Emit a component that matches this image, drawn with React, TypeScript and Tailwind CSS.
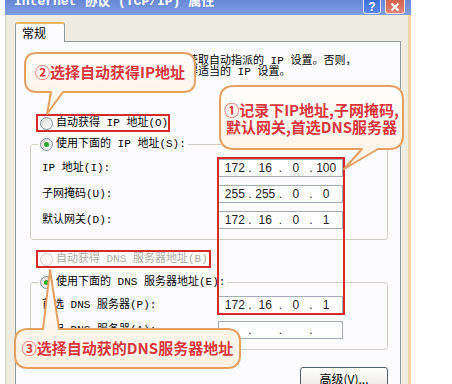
import React from 'react';

const sys = "font-['Liberation_Mono','Noto_Sans_CJK_SC',monospace]";
const note = "font-['Noto_Sans_CJK_SC','Liberation_Sans',sans-serif]";

function Radio({ checked = false, disabled = false }: { checked?: boolean; disabled?: boolean }) {
  return (
    <span
      className={`w-[13px] h-[13px] shrink-0 rounded-full border flex items-center justify-center bg-gradient-to-br ${
        disabled ? 'border-[#d3d1c6] from-[#f1f0ea] to-white' : 'border-[#7d8fa1] from-[#d9d9d2] to-white'
      }`}
    >
      {checked && <span className="w-[5px] h-[5px] rounded-full bg-[#2da52d]" />}
    </span>
  );
}

function IpInput({ parts }: { parts: string[] }) {
  return (
    <div className="w-[125px] h-[18px] border border-[#a3adb8] bg-white flex items-center px-[4px] text-[12px] font-['Liberation_Sans',sans-serif] text-[#222]">
      {parts.map((p, i) => (
        <React.Fragment key={i}>
          {i > 0 && <span className="w-[7px] text-center">.</span>}
          <span className="w-[24px] text-center">{p}</span>
        </React.Fragment>
      ))}
    </div>
  );
}

function Row({ label, parts }: { label: string; parts: string[] }) {
  return (
    <div className="flex items-center h-[18px]">
      <span className="w-[176px] whitespace-nowrap">{label}</span>
      <IpInput parts={parts} />
    </div>
  );
}

const bubblePaths = [
  // ② bubble, tail down to first radio
  'M37,53 H183 Q195,53 195,65 V80 Q195,92 183,92 H63 L47,114 L51,92 H37 Q25,92 25,80 V65 Q25,53 37,53 Z',
  // ① bubble, tail down-left to the address box
  'M234,86 H389 Q403,86 403,100 V135 Q403,149 389,149 H378 L344,169 L362,149 H234 Q220,149 220,135 V100 Q220,86 234,86 Z',
  // ③ bubble, tail up to DNS radio
  'M28,329 H43 L50,270 L59,329 H227 Q240,329 240,342 V355 Q240,368 227,368 H28 Q15,368 15,355 V342 Q15,329 28,329 Z',
];

export default function App() {
  return (
    <div className={`relative w-[452px] h-[384px] overflow-hidden bg-white ${sys} text-[11px] text-black`}>
      <div className="ml-[5px] w-[406px] h-full flex flex-col">
        {/* Title bar */}
        <div className="h-[15px] shrink-0 flex bg-gradient-to-b from-[#6888d6] to-[#7e9de2] pl-[9px] pr-[6px] overflow-hidden">
          <span className="text-[13px] leading-[15px] -mt-[6px] font-bold text-white whitespace-nowrap">
            Internet 协议 (TCP/IP) 属性
          </span>
          <div className="ml-auto flex gap-[4px]">
            <div className="w-[18px] h-[14px] rounded-b-[3px] border border-t-0 border-white/80 bg-gradient-to-b from-[#3f6fd8] to-[#5a86e4] flex items-center justify-center text-white text-[12px] leading-none font-bold font-['Liberation_Sans',sans-serif]">
              ?
            </div>
            <div className="w-[20px] h-[14px] rounded-b-[3px] border border-t-0 border-white/80 bg-gradient-to-b from-[#d6624f] to-[#e08373] flex items-center justify-center">
              <svg width="10" height="10" viewBox="0 0 10 10">
                <path d="M1.5 1.5 L8.5 8.5 M8.5 1.5 L1.5 8.5" stroke="white" strokeWidth="2" />
              </svg>
            </div>
          </div>
        </div>

        {/* Body */}
        <div className="flex-1 bg-[#efede2] border-l border-l-[#d2cfc2] border-r-[3px] border-r-[#f3d3a2] pt-[7px] pl-[9px]">
          <div className="relative z-10 -mb-px w-[50px] h-[20px] bg-[#fcfcfe] border border-b-0 border-[#919b9c] border-t-2 border-t-[#eeb45e] rounded-t-[3px] pl-[6px] text-[12px] leading-[17px] font-['Noto_Sans_CJK_SC',sans-serif]">
            常规
          </div>
          <div className="w-[386px] h-[400px] bg-[#fcfcfe] border border-[#919b9c] flex flex-col items-start">
            <p className="ml-[28px] mt-[14px] leading-[11px] whitespace-nowrap">
              如果网络支持此功能，则可以获取自动指派的 IP 设置。否则，
              <br />
              您需要从网络系统管理员处获得适当的 IP 设置。
            </p>

            <div className="ml-[24px] mt-[37px] h-[16px] flex items-center gap-[3px] whitespace-nowrap">
              <Radio />
              <span>自动获得 IP 地址(O)</span>
            </div>

            <fieldset className="ml-[14px] mt-[5px] w-[358px] border border-[#d3d0bf] rounded-[3px] px-[11px] pt-[7px] pb-[10px] flex flex-col gap-[8px]">
              <legend className="-ml-[4px] px-[2px] h-[16px]">
                <span className="flex items-center gap-[3px] h-[16px] whitespace-nowrap">
                  <Radio checked />
                  <span>使用下面的 IP 地址(S):</span>
                </span>
              </legend>
              <Row label="IP 地址(I):" parts={['172', '16', '0', '100']} />
              <Row label="子网掩码(U):" parts={['255', '255', '0', '0']} />
              <Row label="默认网关(D):" parts={['172', '16', '0', '1']} />
            </fieldset>

            <div className="ml-[24px] mt-[11px] h-[16px] flex items-center gap-[3px] whitespace-nowrap text-[#aeac9f]">
              <Radio disabled />
              <span>自动获得 DNS 服务器地址(B)</span>
            </div>

            <fieldset className="ml-[14px] mt-[7px] w-[358px] border border-[#d3d0bf] rounded-[3px] px-[11px] pt-[6px] pb-[10px] flex flex-col gap-[7px]">
              <legend className="-ml-[4px] px-[2px] h-[16px]">
                <span className="flex items-center gap-[3px] h-[16px] whitespace-nowrap">
                  <Radio checked />
                  <span>使用下面的 DNS 服务器地址(E):</span>
                </span>
              </legend>
              <Row label="首选 DNS 服务器(P):" parts={['172', '16', '0', '1']} />
              <Row label="备用 DNS 服务器(A):" parts={['', '', '', '']} />
            </fieldset>

            <button className="self-end mr-[12px] mt-[17px] w-[88px] h-[23px] rounded-[3px] border border-[#4f5d6e] bg-gradient-to-b from-white to-[#e9e8e1] text-[12px] font-['Noto_Sans_CJK_SC',sans-serif]">
              高级(V)...
            </button>
          </div>
        </div>
      </div>

      {/* Red highlight boxes */}
      <div className="absolute left-[36px] top-[114px] w-[134px] h-[18px] border-2 border-[#d32b2b]" />
      <div className="absolute left-[217px] top-[157px] w-[128px] h-[158px] border-2 border-[#d32b2b]" />
      <div className="absolute left-[36px] top-[250px] w-[175px] h-[18px] border-2 border-[#d32b2b]" />

      {/* Callout bubbles */}
      <svg className="absolute left-0 top-0 pointer-events-none" width="452" height="384">
        <defs>
          <linearGradient id="bubble" x1="0" y1="0" x2="0" y2="1">
            <stop offset="0" stopColor="#fffefb" />
            <stop offset="1" stopColor="#fcf1e2" />
          </linearGradient>
        </defs>
        {bubblePaths.map((d, i) => (
          <path key={i} d={d} fill="url(#bubble)" stroke="#e4a061" strokeWidth="2" strokeLinejoin="round" />
        ))}
      </svg>

      <div className={`absolute left-[25px] top-[53px] w-[170px] h-[39px] flex items-center justify-center ${note} text-[15px] font-bold text-[#d8363c] [text-shadow:0_0_2px_white]`}>
        ②选择自动获得IP地址
      </div>
      <div className={`absolute left-[220px] top-[86px] w-[183px] h-[63px] flex flex-col items-center justify-center ${note} text-[15px] leading-[17px] font-bold text-[#d8363c] [text-shadow:0_0_2px_white]`}>
        <span>①记录下IP地址,子网掩码,</span>
        <span>默认网关,首选DNS服务器</span>
      </div>
      <div className={`absolute left-[15px] top-[329px] w-[225px] h-[39px] flex items-center justify-center ${note} text-[15px] font-bold text-[#d8363c] [text-shadow:0_0_2px_white]`}>
        ③选择自动获的DNS服务器地址
      </div>
    </div>
  );
}
